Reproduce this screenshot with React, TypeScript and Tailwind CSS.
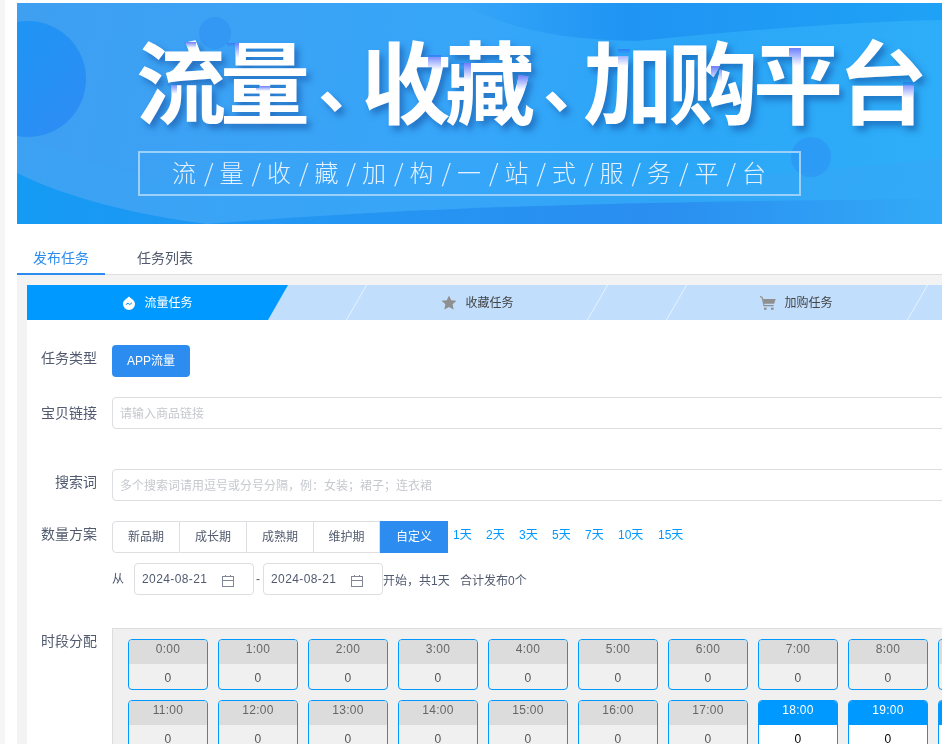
const CN = "font-['Liberation_Sans','Noto_Sans_CJK_SC',sans-serif]";

function Patch({ x, y, w, h }: { x: number; y: number; w: number; h: number }) {
  return (
    <div
      className="absolute bg-gradient-to-b from-[#6f7dfb] to-[#ffffff] mix-blend-darken"
      style={{ left: x - 17, top: y - 3, width: w, height: h }}
    />
  );
}

function Banner() {
  const title = [
    ["流", 84, 90],
    ["量", 98, 90],
    ["、", 43, 66],
    ["收", 84, 90],
    ["藏", 98, 90],
    ["、", 40, 66],
    ["加", 85, 90],
    ["购", 85, 90],
    ["平", 85, 90],
    ["台", 85, 90],
  ] as const;
  const sub = "流/量/收/藏/加/构/一/站/式/服/务/平/台".split("/");
  return (
    <div className="relative h-[221px] overflow-hidden bg-[linear-gradient(100deg,#3f9ff1_0%,#36a6f9_50%,#2ba6f7_70%,#2eaef8_100%)]">
      <svg className="absolute inset-0" width="925" height="221" viewBox="0 0 925 221">
        <defs>
          <linearGradient id="c1" x1="0" y1="0" x2="1" y2="1">
            <stop offset="0" stopColor="#1a97f5" />
            <stop offset="1" stopColor="#2f8cf5" />
          </linearGradient>
          <linearGradient id="top" x1="0" y1="0" x2="1" y2="0">
            <stop offset="0" stopColor="#2194f3" stopOpacity="0" />
            <stop offset="0.35" stopColor="#2094f3" />
            <stop offset="1" stopColor="#1ea2f6" />
          </linearGradient>
          <linearGradient id="bot" x1="0" y1="0" x2="1" y2="0">
            <stop offset="0" stopColor="#1f97f3" stopOpacity="0.9" />
            <stop offset="0.6" stopColor="#2a8ef0" />
            <stop offset="1" stopColor="#2a8ef0" stopOpacity="0" />
          </linearGradient>
          <linearGradient id="bl" x1="0" y1="0" x2="1" y2="0">
            <stop offset="0" stopColor="#149bf4" />
            <stop offset="1" stopColor="#1f97f3" />
          </linearGradient>
        </defs>
        <path d="M0 130 C120 190 300 200 470 190 C620 180 800 170 925 155 L925 221 L0 221 Z" fill="#3aa5f6" opacity="0.4" />
        <path d="M0 170 C50 195 120 212 190 221 L0 221 Z" fill="url(#bl)" />
        <path d="M190 221 C300 212 420 206 520 203 C620 200 700 198 925 196 L925 221 Z" fill="url(#bot)" />
        <path d="M440 0 C500 30 550 36 620 38 C740 26 850 18 925 17 L925 0 Z" fill="url(#top)" />
        <circle cx="11" cy="76" r="58" fill="url(#c1)" />
        <circle cx="198" cy="30" r="16" fill="#2f90f3" opacity="0.6" />
        <circle cx="794" cy="154" r="20" fill="#2d94f5" opacity="0.65" />
      </svg>
      <div className="relative flex pl-[119px] pt-[25px] text-white font-['Noto_Sans_CJK_SC',sans-serif] font-bold leading-[100px] [text-shadow:4px_5px_6px_rgba(20,70,150,0.5)]">
        {title.map(([c, w, s], i) => (
          <span key={i} className="block shrink-0" style={{ width: w, fontSize: s }}>
            {c}
          </span>
        ))}
      </div>
      <Patch x={184} y={42} w={12} h={6} />
      <Patch x={227} y={43} w={12} h={15} />
      <Patch x={167} y={84} w={10} h={10} />
      <Patch x={256} y={86} w={14} h={5} />
      <Patch x={428} y={55} w={13} h={15} />
      <Patch x={460} y={63} w={11} h={17} />
      <Patch x={517} y={75} w={12} h={15} />
      <Patch x={618} y={49} w={12} h={17} />
      <Patch x={711} y={66} w={11} h={16} />
      <Patch x={789} y={48} w={12} h={18} />
      <Patch x={903} y={82} w={12} h={16} />
      <div className="absolute left-[121px] top-[148px] flex h-[45px] w-[663px] items-center border-2 border-[#9bd0fb] pb-[3px] pl-[32px] font-['Noto_Sans_CJK_SC',sans-serif] font-light text-[24px] text-[#e4f2ff]">
        {sub.map((c, i) => (
          <span key={i} className="flex w-[47.5px] shrink-0">
            <span className="w-[24px] shrink-0">{c}</span>
            {i < sub.length - 1 && <span className="w-[23.5px] shrink-0 pl-[8px]">/</span>}
          </span>
        ))}
      </div>
    </div>
  );
}

function Step({ icon, label, active }: { icon: React.ReactNode; label: string; active?: boolean }) {
  return (
    <div className={`flex items-center justify-center gap-2 text-xs h-full ${active ? "text-white" : "text-[#444]"}`}>
      {icon}
      <span>{label}</span>
    </div>
  );
}

function Slash() {
  return <div className="absolute right-0 top-0 h-full w-px -skew-x-[30deg] bg-[#e6f2ff]" />;
}

function Drop() {
  return (
    <svg width="14" height="14" viewBox="0 0 14 14">
      <path d="M7 .5 C8 2 13 4 13 8 A6 6 0 0 1 1 8 C1 4 6 2 7 .5Z" fill="#fff" />
      <path d="M3.8 8.6 L6 7.2 L7.6 8.6 L10 6.8" fill="none" stroke="#0099ff" strokeWidth="1" />
    </svg>
  );
}
function Star() {
  return (
    <svg width="16" height="15" viewBox="0 0 16 15">
      <path d="M8 .5 L10.2 5.2 L15.5 5.8 L11.6 9.3 L12.7 14.5 L8 11.9 L3.3 14.5 L4.4 9.3 L.5 5.8 L5.8 5.2Z" fill="#8f8f8f" />
    </svg>
  );
}
function Cart() {
  return (
    <svg width="16" height="14" viewBox="0 0 16 14">
      <path d="M0 .6 L2.2 1.4 L4 9.6 H13.6" fill="none" stroke="#8f8f8f" strokeWidth="1.2" />
      <path d="M3 3 H15.6 L14.2 7.8 H4Z" fill="#8f8f8f" />
      <rect x="4" y="11.6" width="2.6" height="2.2" fill="#8f8f8f" />
      <rect x="11" y="11.6" width="2.6" height="2.2" fill="#8f8f8f" />
    </svg>
  );
}

function StepBar() {
  return (
    <div className="flex h-[35px] w-[1200px] bg-[#c1dffd]">
      <div className="-mr-[10px] w-[261px] shrink-0 bg-[#0099ff] [clip-path:polygon(0_0,100%_0,calc(100%-20px)_100%,0_100%)] relative z-10">
        <Step active icon={<Drop />} label="流量任务" />
      </div>
      <div className="relative w-[79px] shrink-0"><Slash /></div>
      <div className="relative w-[241px] shrink-0">
        <Step icon={<Star />} label="收藏任务" />
        <Slash />
      </div>
      <div className="relative w-[79px] shrink-0"><Slash /></div>
      <div className="relative w-[241px] shrink-0">
        <div className="-ml-[2px] h-full"><Step icon={<Cart />} label="加购任务" /></div>
        <Slash />
      </div>
    </div>
  );
}

function Label({ children, className = "" }: { children: React.ReactNode; className?: string }) {
  return <div className={`w-[70px] shrink-0 text-right text-sm text-[#515a6e] ${className}`}>{children}</div>;
}

function TextBox({ placeholder }: { placeholder: string }) {
  return (
    <div className="flex h-8 w-[1000px] items-center rounded border border-[#dcdee2] bg-white pl-[7px] pt-[2px] text-xs text-[#c5c8ce]">
      {placeholder}
    </div>
  );
}

function DateBox() {
  return (
    <div className="flex h-8 w-[120px] items-center justify-between rounded border border-[#dcdee2] pl-[7px] pr-[18px] text-xs tracking-[0.4px] text-[#515a6e]">
      <span className="pb-[1px]">2024-08-21</span>
      <svg width="14" height="14" viewBox="0 0 14 14" className="mt-[3px]" fill="none" stroke="#808695" strokeWidth="1">
        <rect x="1.5" y="2.5" width="11" height="10" />
        <path d="M1.5 6.5 H12.5 M4.5 1 V2.5 M9.5 1 V2.5" />
      </svg>
    </div>
  );
}

function Cell({ t, on }: { t: string; on?: boolean }) {
  return (
    <div
      className={`h-[51px] w-[80px] shrink-0 overflow-hidden rounded border border-[#0099ff] text-center text-xs tracking-[0.3px] ${
        on ? "bg-white text-black" : "bg-[#f0f0f0] text-[#555]"
      }`}
    >
      <div className={`h-6 leading-[18px] ${on ? "bg-[#0099ff] text-white" : "bg-[#dcdcdc] text-[#666]"}`}>{t}</div>
      <div className="leading-[28px]">0</div>
    </div>
  );
}

export default function App() {
  const segs = ["新品期", "成长期", "成熟期", "维护期"];
  const widths = ["w-[68px]", "w-[67px]", "w-[67px]", "w-[66px]"];
  const days = [
    ["1天", 33],
    ["2天", 33],
    ["3天", 33],
    ["5天", 33],
    ["7天", 33],
    ["10天", 40],
    ["15天", 40],
  ] as const;
  const row1 = Array.from({ length: 10 }, (_, i) => `${i}:00`);
  const row2 = Array.from({ length: 10 }, (_, i) => `${i + 11}:00`);
  return (
    <div className={`h-[744px] w-[942px] overflow-hidden bg-[#f5f5f5] pl-[5px] ${CN}`}>
      <div className="h-full bg-white pl-3 pt-[3px]">
        <div className="w-[925px]">
          <Banner />
        </div>
        <div className="mt-[16px] flex h-[35px] w-[925px] border-b border-[#dcdee2] text-sm">
          <div className="-mb-px h-[35px] w-[88px] border-b-2 border-[#2d8cf0] pt-[9px] text-center leading-[18px] text-[#2d8cf0]">发布任务</div>
          <div className="ml-[32px] pt-[9px] leading-[18px] text-[#515a6e]">任务列表</div>
        </div>
        <div className="w-[1300px] bg-[#f3f3f3] pl-[10px] pt-[10px]">
          <StepBar />
          <div className="h-[460px] bg-white pl-0">
            <div className="flex flex-col pt-[25px]">
              <div className="flex gap-[15px]">
                <Label className="pt-[3px]">任务类型</Label>
                <div className="flex h-8 w-[78px] items-center justify-center rounded bg-[#2d8cf0] text-xs text-white">APP流量</div>
              </div>
              <div className="mt-5 flex gap-[15px]">
                <Label className="pt-[6px]">宝贝链接</Label>
                <TextBox placeholder="请输入商品链接" />
              </div>
              <div className="mt-10 flex gap-[15px]">
                <Label className="pt-[3px]">搜索词</Label>
                <TextBox placeholder="多个搜索词请用逗号或分号分隔，例：女装；裙子；连衣裙" />
              </div>
              <div className="mt-5 flex gap-[15px]">
                <Label className="pt-[3px]">数量方案</Label>
                <div className="flex h-8 text-xs text-[#515a6e]">
                  {segs.map((s, i) => (
                    <div
                      key={s}
                      className={`flex items-center justify-center border-y border-r border-[#dcdee2] ${widths[i]} ${i === 0 ? "rounded-l border-l" : ""}`}
                    >
                      {s}
                    </div>
                  ))}
                  <div className="flex w-[68px] items-center justify-center bg-[#2d8cf0] text-white">自定义</div>
                </div>
                <div className="-ml-[10px] flex pt-[6px] text-xs text-[#0099ff]">
                  {days.map(([d, w]) => (
                    <span key={d} style={{ width: w }}>{d}</span>
                  ))}
                </div>
              </div>
              <div className="ml-[85px] mt-[10px] flex h-8 items-center text-xs text-[#515a6e]">
                <span className="w-[22px]">从</span>
                <DateBox />
                <span className="w-[9px] pl-[2px]">-</span>
                <DateBox />
                <span className="w-[77px] pt-[3px]">开始，共1天</span>
                <span className="pt-[3px]">合计发布0个</span>
              </div>
              <div className="mt-[33px] flex gap-[15px]">
                <Label className="pt-[3px]">时段分配</Label>
                <div className="flex flex-col gap-[10px] border border-[#dddddd] bg-[#f0f0f0] pl-[15px] pt-[10px] w-[1000px] h-[200px]">
                  <div className="flex gap-[10px]">
                    {row1.map((t) => <Cell key={t} t={t} />)}
                  </div>
                  <div className="flex gap-[10px]">
                    {row2.map((t, i) => <Cell key={t} t={t} on={i >= 7} />)}
                  </div>
                </div>
              </div>
            </div>
          </div>
        </div>
      </div>
    </div>
  );
}
